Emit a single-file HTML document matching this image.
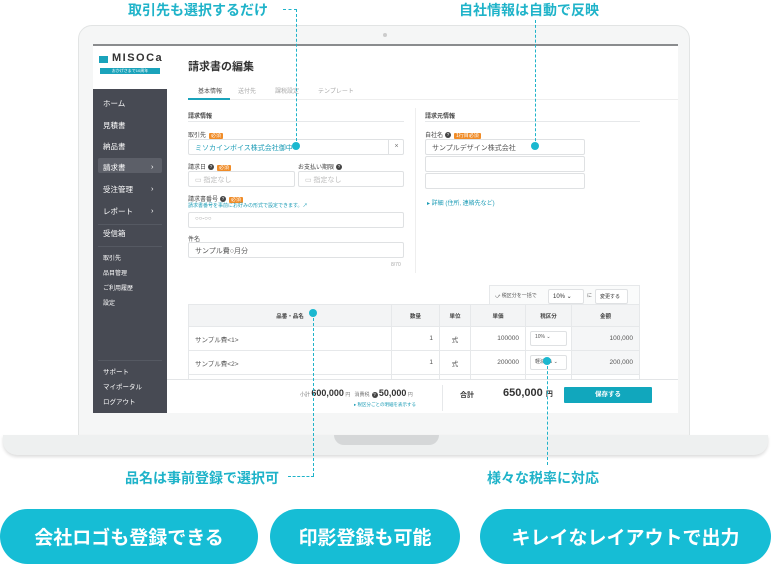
<!DOCTYPE html>
<html><head><meta charset="utf-8">
<style>
*{margin:0;padding:0;box-sizing:border-box}
body{width:771px;height:564px;background:#fff;position:relative;overflow:hidden;font-family:"Liberation Sans","Noto Sans CJK JP",sans-serif;color:#333}
.a{position:absolute;white-space:nowrap}
.lap{left:78px;top:25px;width:612px;height:415px;background:#f5f6f6;border:1px solid #e2e4e4;border-radius:14px 14px 0 0}
.scr{left:93px;top:44px;width:585px;height:369px;background:#fff;border-top:2px solid #8a8c8e;overflow:hidden}
.base{left:3px;top:435px;width:765px;height:20px;background:#eef0f0;border-radius:0 0 14px 14px;box-shadow:0 2px 3px #ddd}
.notch{left:334px;top:435px;width:105px;height:10px;background:#d5d7d8;border-radius:0 0 10px 10px}
.side{left:0;top:0;width:74px;height:369px;background:#474a53}
.logo{left:0;top:0;width:74px;height:43px;background:#fff}
.si{color:#fff;font-size:7.5px;left:10px}
.lab{font-size:6px;color:#444}
.q{display:inline-block;width:6px;height:6px;border-radius:50%;background:#444;color:#fff;font-size:4.5px;line-height:6px;text-align:center;vertical-align:middle;margin-left:2px}
.inp{border:1px solid #dfe1e3;border-radius:2px;background:#fff;height:16px;font-size:7px;padding:3px 6px;color:#555}
.req{background:#f08c28;color:#fff;font-size:5px;padding:0 2px;border-radius:1px;margin-left:3px}
.ann{color:#1fb3c9;font-weight:bold;font-size:14px}
.dv{border-left:1px dashed #1fb3c9;width:0}
.dh{border-top:1px dashed #1fb3c9;height:0}
.dot{width:8px;height:8px;border-radius:50%;background:#1ab8d0}
.pill{top:509px;height:55px;background:#16bdd5;border-radius:28px;color:#fff;font-weight:bold;font-size:19px;display:flex;align-items:center;justify-content:center}
table{border-collapse:collapse;font-size:6.5px}
td{border:1px solid #e6e8ea;height:24px;padding:0 6px;color:#555;vertical-align:middle}
th{border:1px solid #e6e8ea;height:22px;background:#f3f4f5;font-size:5.5px;color:#444}
.sel{border:1px solid #dfe1e3;border-radius:2px;height:15px;font-size:6px;padding:3px 4px;background:#fff}
</style></head><body>
<div class="a ann" style="left:128px;top:0px">取引先も選択するだけ</div>
<div class="a ann" style="left:459px;top:0px">自社情報は自動で反映</div>
<div class="a lap"></div>
<div class="a" style="left:383px;top:33px;width:4px;height:4px;border-radius:50%;background:#ccc"></div>
<div class="a base"></div>
<div class="a notch"></div>
<div class="a scr">
 <div class="a side"></div>
 <div class="a logo">
  <div class="a" style="left:6px;top:10px;width:9px;height:7px;background:#1aa3bb"></div>
  <div class="a" style="left:19px;top:6px;font-size:11px;font-weight:bold;letter-spacing:1.5px;color:#333">MISOCa</div>
  <div class="a" style="left:7px;top:22px;width:60px;height:6px;background:#1aa3bb;color:#fff;font-size:4px;text-align:center;line-height:6px">おかげさまで10周年</div>
 </div>
 <div class="a si" style="top:52px">ホーム</div>
 <div class="a si" style="top:74px">見積書</div>
 <div class="a si" style="top:95px">納品書</div>
 <div class="a" style="left:5px;top:112px;width:64px;height:15px;background:#5c5f68;border-radius:2px"></div>
 <div class="a si" style="top:116px">請求書</div><div class="a si" style="left:58px;top:116px">›</div>
 <div class="a si" style="top:138px">受注管理</div><div class="a si" style="left:58px;top:138px">›</div>
 <div class="a si" style="top:160px">レポート</div><div class="a si" style="left:58px;top:160px">›</div>
 <div class="a" style="left:5px;top:178px;width:64px;height:1px;background:#555962"></div>
 <div class="a si" style="top:182px">受信箱</div>
 <div class="a" style="left:5px;top:200px;width:64px;height:1px;background:#555962"></div>
 <div class="a si" style="top:207px;font-size:6px">取引先</div>
 <div class="a si" style="top:222px;font-size:6px">品目管理</div>
 <div class="a si" style="top:237px;font-size:6px">ご利用履歴</div>
 <div class="a si" style="top:252px;font-size:6px">設定</div>
 <div class="a" style="left:5px;top:314px;width:64px;height:1px;background:#555962"></div>
 <div class="a si" style="top:320px;font-size:6.5px">サポート</div>
 <div class="a si" style="top:335px;font-size:6.5px">マイポータル</div>
 <div class="a si" style="top:350px;font-size:6.5px">ログアウト</div>

 <div class="a" style="left:95px;top:12px;font-size:11px;font-weight:bold;color:#333">請求書の編集</div>
 <div class="a" style="left:105px;top:40px;font-size:6px;color:#555">基本情報</div>
 <div class="a" style="left:145px;top:40px;font-size:6px;color:#aaa">送付先</div>
 <div class="a" style="left:182px;top:40px;font-size:6px;color:#aaa">課税設定</div>
 <div class="a" style="left:225px;top:40px;font-size:6px;color:#aaa">テンプレート</div>
 <div class="a" style="left:95px;top:53px;width:490px;height:1px;background:#eee"></div>
 <div class="a" style="left:95px;top:52px;width:42px;height:2px;background:#1aa3bb"></div>

 <div class="a lab" style="left:95px;top:65px;font-weight:bold">請求情報</div>
 <div class="a" style="left:95px;top:75px;width:216px;height:1px;background:#e6e8ea"></div>
 <div class="a lab" style="left:95px;top:84px">取引先<span class="req">必須</span></div>
 <div class="a inp" style="left:95px;top:93px;width:216px;color:#1a9bb5">ミソカインボイス株式会社御中</div>
 <div class="a" style="left:295px;top:93px;width:16px;height:16px;border-left:1px solid #dfe1e3;font-size:7px;color:#777;text-align:center;line-height:15px">×</div>
 <div class="a lab" style="left:95px;top:116px">請求日<span class="q">?</span><span class="req">必須</span></div>
 <div class="a lab" style="left:205px;top:116px">お支払い期限<span class="q">?</span></div>
 <div class="a inp" style="left:95px;top:125px;width:107px;color:#bbb">▭ 指定なし</div>
 <div class="a inp" style="left:205px;top:125px;width:106px;color:#bbb">▭ 指定なし</div>
 <div class="a lab" style="left:95px;top:148px">請求書番号<span class="q">?</span><span class="req">必須</span></div>
 <div class="a" style="left:95px;top:156px;font-size:5px;color:#1a9bb5">請求書番号を事前にお好みの形式で設定できます。↗</div>
 <div class="a inp" style="left:95px;top:166px;width:216px;color:#999;font-size:6px">○○-○○</div>
 <div class="a lab" style="left:95px;top:188px">件名</div>
 <div class="a inp" style="left:95px;top:196px;width:216px">サンプル費○月分</div>
 <div class="a" style="left:298px;top:216px;font-size:5px;color:#aaa">8/70</div>
 <div class="a" style="left:322px;top:62px;width:1px;height:165px;background:#eee"></div>

 <div class="a lab" style="left:332px;top:65px;font-weight:bold">請求元情報</div>
 <div class="a" style="left:332px;top:75px;width:215px;height:1px;background:#e6e8ea"></div>
 <div class="a lab" style="left:332px;top:84px">自社名<span class="q">?</span><span class="req">1行目必須</span></div>
 <div class="a inp" style="left:332px;top:93px;width:160px">サンプルデザイン株式会社</div>
 <div class="a inp" style="left:332px;top:110px;width:160px"></div>
 <div class="a inp" style="left:332px;top:127px;width:160px"></div>
 <div class="a" style="left:334px;top:152px;font-size:6px;color:#1a9bb5">▸ 詳細 (住所, 連絡先など)</div>

 <div class="a" style="left:396px;top:239px;width:151px;height:20px;border:1px solid #e6e8ea;background:#fafbfb"></div>
 <div class="a" style="left:402px;top:246px;font-size:5px;color:#555">⤻ 税区分を一括で</div>
 <div class="a sel" style="left:455px;top:243px;width:36px">10% ⌄</div>
 <div class="a" style="left:494px;top:246px;font-size:5px;color:#555">に</div>
 <div class="a sel" style="left:502px;top:243px;width:33px;font-size:5px">変更する</div>
 <table class="a" style="left:95px;top:258px;width:452px">
  <tr><th style="width:203px">品番・品名</th><th style="width:48px">数量</th><th style="width:31px">単位</th><th style="width:55px">単価</th><th style="width:46px">税区分</th><th>金額</th></tr>
  <tr><td>サンプル費&lt;1&gt;</td><td style="text-align:right">1</td><td style="text-align:center">式</td><td style="text-align:right">100000</td><td style="padding:0 4px"><div class="sel" style="font-size:5px;padding:2px 4px">10% ⌄</div></td><td style="text-align:right;background:#f5f6f7">100,000</td></tr>
  <tr><td>サンプル費&lt;2&gt;</td><td style="text-align:right">1</td><td style="text-align:center">式</td><td style="text-align:right">200000</td><td style="padding:0 4px"><div class="sel" style="font-size:5px;padding:2px 4px">軽減8% ⌄</div></td><td style="text-align:right;background:#f5f6f7">200,000</td></tr>
  <tr><td></td><td></td><td></td><td></td><td></td><td></td></tr>
 </table>
 <div class="a" style="left:74px;top:333px;width:511px;height:36px;background:#fff;border-top:1px solid #e3e5e7"></div>
 <div class="a" style="left:207px;top:342px;font-size:5px;color:#777">小計 <b style="font-size:9px;color:#333">600,000</b> 円 &nbsp; 消費税<span class="q">?</span> <b style="font-size:9px;color:#333">50,000</b> 円</div>
 <div class="a" style="left:261px;top:356px;font-size:4.5px;color:#1a9bb5">▸ 税区分ごとの明細を表示する</div>
 <div class="a" style="left:349px;top:339px;width:1px;height:26px;background:#e6e8ea"></div>
 <div class="a" style="left:367px;top:344px;font-size:7px;font-weight:bold">合計</div>
 <div class="a" style="left:410px;top:341px;font-size:11px;font-weight:bold">650,000 <span style="font-size:7px">円</span></div>
 <div class="a" style="left:471px;top:341px;width:88px;height:16px;background:#11a7bd;border-radius:1px;color:#fff;font-size:6.5px;font-weight:bold;text-align:center;line-height:16px">保存する</div>
</div>

<div class="a dh" style="left:283px;top:9px;width:14px"></div>
<div class="a dv" style="left:296px;top:9px;height:137px"></div>
<div class="a dot" style="left:292px;top:142px"></div>
<div class="a dv" style="left:535px;top:20px;height:126px"></div>
<div class="a dot" style="left:531px;top:142px"></div>
<div class="a dot" style="left:309px;top:309px"></div>
<div class="a dv" style="left:313px;top:313px;height:163px"></div>
<div class="a dh" style="left:288px;top:476px;width:26px"></div>
<div class="a dot" style="left:543px;top:357px"></div>
<div class="a dv" style="left:547px;top:361px;height:104px"></div>
<div class="a ann" style="left:125px;top:468px">品名は事前登録で選択可</div>
<div class="a ann" style="left:487px;top:468px">様々な税率に対応</div>

<div class="a pill" style="left:0;width:258px">会社ロゴも登録できる</div>
<div class="a pill" style="left:270px;width:190px">印影登録も可能</div>
<div class="a pill" style="left:480px;width:291px">キレイなレイアウトで出力</div>
</body></html>
